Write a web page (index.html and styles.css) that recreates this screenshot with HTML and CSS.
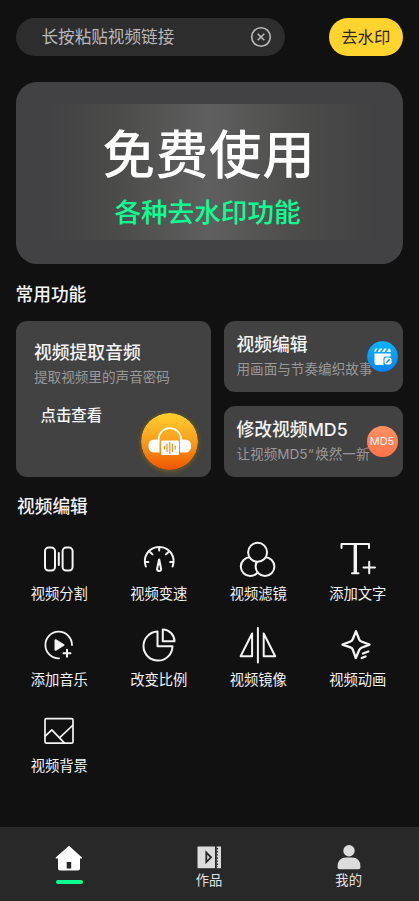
FILE: index.html
```html
<!DOCTYPE html>
<html lang="zh-CN">
<head>
<meta charset="utf-8">
<title>去水印</title>
<link rel="stylesheet" href="styles.css">
</head>
<body>
<main class="page">
  <header class="topbar">
    <div class="search">
      <span>长按粘贴视频链接</span>
      <svg class="clear" width="22" height="22" viewBox="0 0 22 22"><circle cx="11" cy="11" r="9.3"/><path d="M7.7 7.7l6.6 6.6M14.3 7.7l-6.6 6.6"/></svg>
    </div>
    <button class="remove">去水印</button>
  </header>

  <section class="banner">
    <div class="glow">
      <h1>免费使用</h1>
      <p>各种去水印功能</p>
    </div>
  </section>

  <h2 class="heading">常用功能</h2>
  <section class="features">
    <article class="card card-audio">
      <h3>视频提取音频</h3>
      <p>提取视频里的声音密码</p>
      <span class="view">点击查看</span>
      <svg class="badge-audio" width="57" height="57" viewBox="0 0 57 57">
        <defs><linearGradient id="orange" x1="0" y1="0" x2="0" y2="1"><stop offset="0" stop-color="#ffd22e"/><stop offset=".5" stop-color="#fa9c1c"/><stop offset="1" stop-color="#ef5600"/></linearGradient></defs>
        <circle cx="28.5" cy="28.5" r="28.5" fill="url(#orange)"/>
        <path d="M17.5 28v-1.5a11.3 11.3 0 0 1 22.6 0V28" fill="none" stroke="#fff" stroke-width="1.7"/>
        <path d="M18.5 26.5v13h-5.500a5.500 5.500 0 0 1-5.500-5.500v-2a5.500 5.500 0 0 1 5.500-5.500zM39 26.500v13h5.500a5.500 5.500 0 0 0 5.500-5.500v-2a5.500 5.500 0 0 0-5.500-5.500z" fill="#fff"/>
        <rect x="20" y="27.500" width="18" height="14.500" rx="1" fill="#fff"/>
        <path d="M23.500 33v3M26 31v7.500M28.800 29.500v11M31.500 31v7.500M34.300 33v3" stroke="#f88a16" stroke-width="1.200" stroke-linecap="round"/>
      </svg>
    </article>
    <article class="card card-small">
      <h3>视频编辑</h3>
      <p>用画面与节奏编织故事</p>
      <svg class="badge" width="31" height="31" viewBox="0 0 31 31">
        <defs><linearGradient id="blue" x1="0" y1="0" x2="0" y2="1"><stop stop-color="#08b5ff"/><stop offset="1" stop-color="#0784f5"/></linearGradient></defs>
        <circle cx="15.500" cy="15.500" r="15.300" fill="url(#blue)"/>
        <path d="M7.500 11V9q0-1.500 1.500-1.500h1.500L8.300 11zM10.500 11l2.300-3.500h2.500L13 11zM15 11l2.300-3.500h2.500L17.500 11zM19.500 11l2.300-3.500q1.900 0 1.900 2V11z" fill="#fff"/>
        <path d="M7.500 12.500h16.200v3h-5.200q-2 0-2 2v6.500H9.500q-2 0-2-2z" fill="#fff"/>
        <rect x="17.500" y="16.500" width="7" height="7" rx="2" fill="#fff"/><path d="M19.300 21.700l3.400-3.400" stroke="#0784f5" stroke-width="1.300"/>
      </svg>
    </article>
    <article class="card card-small">
      <h3>修改视频MD5</h3>
      <p>让视频MD5<span class="quote">“</span>焕然一新</p>
      <span class="badge badge-md5">MD5</span>
    </article>
  </section>

  <h2 class="heading heading-tools">视频编辑</h2>
  <section class="tools">
    <div class="tool"><svg viewBox="0 0 40 40"><rect x="6" y="8.600" width="10" height="23" rx="3.500"/><rect x="23.600" y="8.600" width="10" height="23" rx="3.500"/><path d="M19.800 14v12"/></svg><span>视频分割</span></div>
    <div class="tool"><svg viewBox="0 0 40 40"><path d="M6.800 27.500C3.500 18 9.500 7.900 20.200 7.900S37 18 33.600 27.500M20.200 8v3.500M11.200 13.200l2.300 2.200M29.200 13.200l-2.300 2.200M6.300 23h3M34.100 23h-3"/><path d="M20 20.500l-1.900 9.500q0 2 2 2t2-2L20.200 20.500z"/></svg><span>视频变速</span></div>
    <div class="tool"><svg class="overlap" viewBox="0 0 40 40"><circle cx="12.200" cy="27.600" r="9.400"/><circle cx="27" cy="27.600" r="9.400"/><circle cx="19.600" cy="13.300" r="9.500"/></svg><span>视频滤镜</span></div>
    <div class="tool"><svg viewBox="0 0 40 40"><path d="M3.500 9V5.100h27.500V9M14 34.200h6.500M25.500 28.500h11.500M31.200 22.700v11.600"/><path d="M17.300 5v29" stroke-width="3.400" stroke-linecap="butt"/></svg><span>添加文字</span></div>
    <div class="tool"><svg viewBox="0 0 40 40"><path d="M20 33.300A13.300 13.300 0 1 1 33 20" stroke-width="1.800"/><path d="M24.500 28.300h7M28 24.800v7"/><path d="M16.500 15.200v9.600l8-4.800z" fill="#f4f4f4"/></svg><span>添加音乐</span></div>
    <div class="tool"><svg viewBox="0 0 40 40"><path d="M18.500 6.600A14.500 14.500 0 1 0 33.500 21.200H18.500zM23.800 4.500V16.300h11.700A11.900 11.900 0 0 0 23.800 4.500z"/></svg><span>改变比例</span></div>
    <div class="tool"><svg viewBox="0 0 40 40"><path d="M19.900 3v34.500M14.100 8.500v22.700H2.600zM25.700 8.500v22.700h11.500z"/></svg><span>视频镜像</span></div>
    <div class="tool"><svg viewBox="0 0 40 40"><path d="M17.800 33L14.600 24.200Q14 22.800 12.500 22.300L4.500 19.600 12.500 16.500Q14 15.900 14.600 14.500L18 6.200 21.200 14.500Q21.800 15.900 23.300 16.500L31.500 19.600 23.500 22.800Q21.800 23.500 21.200 25zM25 28.500l5.300-2M23.700 33l3.800-1.500" stroke-width="2.300"/></svg><span>视频动画</span></div>
    <div class="tool"><svg viewBox="0 0 40 40"><rect x="6" y="7.700" width="28" height="24.500" rx="1.500" stroke-width="1.700"/><path d="M6.500 24.800l6.300-6 12.500 13M20.500 26.800L33.500 14.500" stroke-width="1.700"/></svg><span>视频背景</span></div>
  </section>
</main>

<nav class="tabs">
  <div class="tab">
    <svg width="28" height="26" viewBox="0 0 28 26"><path fill-rule="evenodd" d="M14 0.800L27 12.500q.5 1-.8 1H25v10q0 2-2 2H5q-2 0-2-2v-10H1.500q-1.300 0-.8-1zM11.700 17v6.500h4.500V17z" fill="#fff"/></svg>
    <i class="active"></i>
  </div>
  <div class="tab">
    <svg width="28" height="26" viewBox="0 0 28 26"><path d="M2.500 1.500h17.500v21.700H2.500z" fill="#dcdcdc"/><path d="M11.300 7.500v9.600l4.700-4.800z" fill="none" stroke="#282828" stroke-width="1.800"/><path d="M21.800 1.500H26v21.700h-4.200z" fill="#dcdcdc"/><path d="M22.400 3v19" stroke="#282828" stroke-width="1.300" stroke-dasharray="1.400 1.700"/></svg>
    <span>作品</span>
  </div>
  <div class="tab">
    <svg width="28" height="26" viewBox="0 0 28 26"><circle cx="14" cy="5.700" r="5.700" fill="#dcdcdc"/><path d="M2.500 22q0-9.500 8.500-9.500h6q8.500 0 8.500 9.500 0 2.200-2.200 2.200H4.700Q2.500 24.200 2.500 22z" fill="#dcdcdc"/></svg>
    <span>我的</span>
  </div>
</nav>
</body>
</html>
```

FILE: styles.css
```css
* {
  box-sizing: border-box;
  margin: 0;
  padding: 0;
}

body {
  width: 419px;
  height: 901px;
  display: flex;
  flex-direction: column;
  overflow: hidden;
  background: #111;
  color: #f4f4f4;
  font-family: Inter, "Noto Sans CJK SC", sans-serif;
  white-space: nowrap;
}

.page {
  flex: 1;
  padding: 17.5px 16.5px 0 15.5px;
}

.topbar {
  display: flex;
  justify-content: space-between;
  height: 38px;
}

.search {
  width: 269px;
  padding: 0 13px 0 26px;
  border-radius: 19px;
  background: #2d2d2d;
  display: flex;
  align-items: center;
  justify-content: space-between;
  font-size: 16.6px;
  line-height: 38px;
  color: #b9b9b9;
}

.clear {
  fill: none;
  stroke: #b9b9b9;
  stroke-width: 1.6;
}

.remove {
  width: 73.5px;
  border: 0;
  border-radius: 19px;
  background: #ffd42e;
  color: #2b2610;
  font: 16.4px/37px "Noto Sans CJK SC", sans-serif;
}

.banner {
  height: 182px;
  margin-top: 26px;
  padding: 22.5px 28px;
  border-radius: 21px;
  background: #424244;
}

.glow {
  height: 136px;
  background: linear-gradient(90deg, #424244, #4a4a49 20%, #5f5f5f 50%, #4a4a49 80%, #424244);
  text-align: center;
}

.glow h1 {
  padding-top: 12px;
  font-size: 52.5px;
  font-weight: 500;
  line-height: 78px;
  letter-spacing: 0.8px;
  color: #fff;
}

.glow p {
  font-size: 26.6px;
  font-weight: 500;
  line-height: 36px;
  margin-right: 3px;
  color: #0dff92;
}

.heading {
  margin-top: 18px;
  font-size: 17.7px;
  font-weight: 500;
  line-height: 26px;
}

.features {
  display: grid;
  grid-template-columns: 195px 178.5px;
  grid-template-rows: 70.5px 70.5px;
  gap: 14.5px 13.5px;
  margin-top: 13.5px;
}

.card {
  position: relative;
  border-radius: 11px;
  background: #424242;
}

.card h3 {
  font-size: 17.8px;
  font-weight: 500;
  line-height: 24px;
}

.card p {
  font-size: 13.6px;
  line-height: 24px;
  color: #999;
}

.quote {
  margin-right: 1.5px;
}

.card-audio {
  grid-row: span 2;
  padding: 19.5px 18.5px;
}

.view {
  display: block;
  margin: 15px 0 0 6.5px;
  font-size: 15.4px;
  font-weight: 500;
  line-height: 24px;
}

.badge-audio {
  position: absolute;
  right: 12.5px;
  bottom: 7px;
  border-radius: 50%;
  box-shadow: 0 1px 5px #ac8a0080;
}

.card-small {
  padding: 11.5px 12.5px;
}

.badge {
  position: absolute;
  right: 5px;
  top: 19.5px;
}

.badge-md5 {
  width: 31px;
  height: 31px;
  border-radius: 50%;
  background: linear-gradient(#ff9160, #ff734a);
  font-size: 11px;
  line-height: 31px;
  text-align: center;
}

.heading-tools {
  margin-top: 17.5px;
  padding-left: 1.5px;
}

.tools {
  display: grid;
  grid-template-columns: repeat(4, 99.5px);
  grid-auto-rows: 86px;
  margin: 18.500px 0 0 -6px;
}

.tool {
  display: flex;
  flex-direction: column;
  align-items: center;
}

.tool svg {
  width: 40px;
  height: 40px;
  fill: none;
  stroke: #f4f4f4;
  stroke-width: 2;
  stroke-linecap: round;
  stroke-linejoin: round;
}

.tool .overlap {
  fill: #111;
}

.tool span {
  margin-top: 4px;
  font-size: 14.3px;
  line-height: 22px;
}

.tabs {
  height: 74px;
  display: grid;
  grid-template-columns: repeat(3, 1fr);
  background: #282828;
  border-top: 1px solid #2b2b2b;
}

.tab {
  display: flex;
  flex-direction: column;
  align-items: center;
  padding: 17px 1px 0 0;
}

.tab span {
  font-size: 13.3px;
  line-height: 18px;
  color: #e2e2e2;
}

.active {
  width: 27px;
  height: 3.5px;
  margin-top: 9px;
  border-radius: 2px;
  background: #0dff92;
}
```
